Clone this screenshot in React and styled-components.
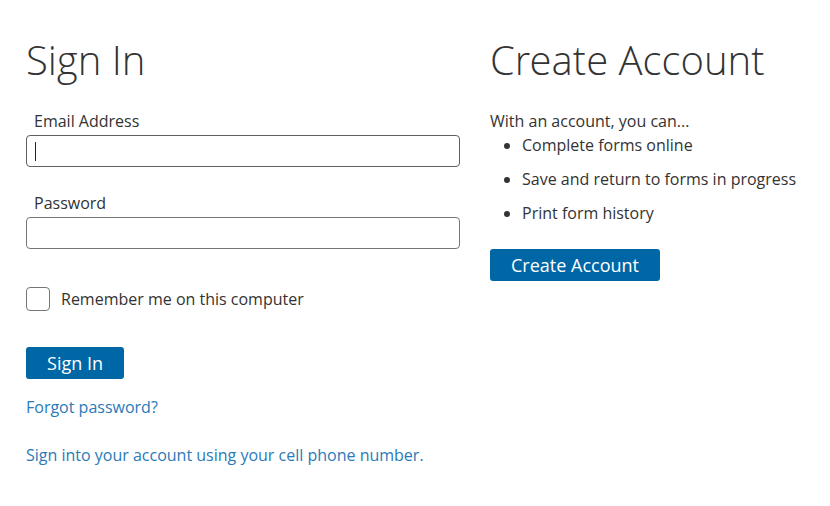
import React from "react";
import styled, { createGlobalStyle } from "styled-components";

const Global = createGlobalStyle`
  html, body { margin: 0; padding: 0; background: #fff; }
  body { font-family: "Open Sans", "Liberation Sans", sans-serif; color: #333; }
  * { box-sizing: border-box; }
`;

const Page = styled.div`
  display: grid;
  grid-template-columns: 434px 1fr;
  column-gap: 30px;
  padding: 38px 0 0 26px;
`;

const Column = styled.div`
  display: flex;
  flex-direction: column;
`;

const Heading = styled.h1`
  margin: 0 0 ${p => p.$gap}px 0;
  font-family: "Open Sans Light", "Open Sans", "Liberation Sans", sans-serif;
  font-size: 40px;
  font-weight: 300;
  line-height: 44px;
  color: #333;
`;

const Field = styled.div`
  display: flex;
  flex-direction: column;
  margin-bottom: ${p => p.$mb}px;
`;

const Label = styled.label`
  font-size: 16px;
  line-height: 24px;
  padding-left: 8px;
  margin-bottom: 2px;
  color: #333;
`;

const InputWrap = styled.div`
  position: relative;
`;

const Input = styled.input`
  display: block;
  width: 100%;
  height: 32px;
  border: 1px solid ${p => (p.$focused ? "#5f5f5f" : "#767676")};
  border-radius: 4px;
  padding: 0 8px;
  font-family: inherit;
  font-size: 16px;
  outline: none;
  caret-color: transparent;
`;

const Caret = styled.span`
  position: absolute;
  left: 9px;
  top: 7px;
  width: 1px;
  height: 19px;
  background: #222;
`;

const CheckRow = styled.label`
  display: flex;
  align-items: center;
  gap: 11px;
  font-size: 16px;
  line-height: 24px;
  color: #333;
  margin-bottom: 36px;
`;

const CheckBox = styled.span`
  width: 24px;
  height: 24px;
  border: 1px solid #767676;
  border-radius: 4px;
  background: #fff;
  flex: none;
`;

const Button = styled.button`
  align-self: flex-start;
  height: 32px;
  width: ${p => p.$w}px;
  background: #0067a6;
  color: #fff;
  border: none;
  border-radius: 3px;
  font-family: inherit;
  font-size: 18px;
  line-height: 32px;
  padding: 0;
  cursor: pointer;
`;

const Link = styled.a`
  font-size: 16px;
  line-height: 24px;
  color: #2a7ab9;
  text-decoration: none;
  margin-top: ${p => p.$mt}px;
`;

const Intro = styled.p`
  margin: 0;
  font-size: 16px;
  line-height: 24px;
`;

const List = styled.ul`
  margin: 0 0 24px 0;
  padding-left: 32px;
  font-size: 16px;
  line-height: 24px;
`;

const Item = styled.li`
  margin-bottom: 10px;
  &:last-child { margin-bottom: 0; }
`;

export default function App() {
  return (
    <>
      <Global />
      <Page>
        <Column>
          <Heading $gap={27}>Sign In</Heading>
          <Field $mb={24}>
            <Label>Email Address</Label>
            <InputWrap>
              <Input type="email" $focused />
              <Caret />
            </InputWrap>
          </Field>
          <Field $mb={38}>
            <Label>Password</Label>
            <Input type="password" />
          </Field>
          <CheckRow>
            <CheckBox />
            Remember me on this computer
          </CheckRow>
          <Button $w={98}>Sign In</Button>
          <Link $mt={16} href="#">Forgot password?</Link>
          <Link $mt={24} href="#">Sign into your account using your cell phone number.</Link>
        </Column>
        <Column>
          <Heading $gap={27}>Create Account</Heading>
          <Intro>With an account, you can...</Intro>
          <List>
            <Item>Complete forms online</Item>
            <Item>Save and return to forms in progress</Item>
            <Item>Print form history</Item>
          </List>
          <Button $w={170}>Create Account</Button>
        </Column>
      </Page>
    </>
  );
}
